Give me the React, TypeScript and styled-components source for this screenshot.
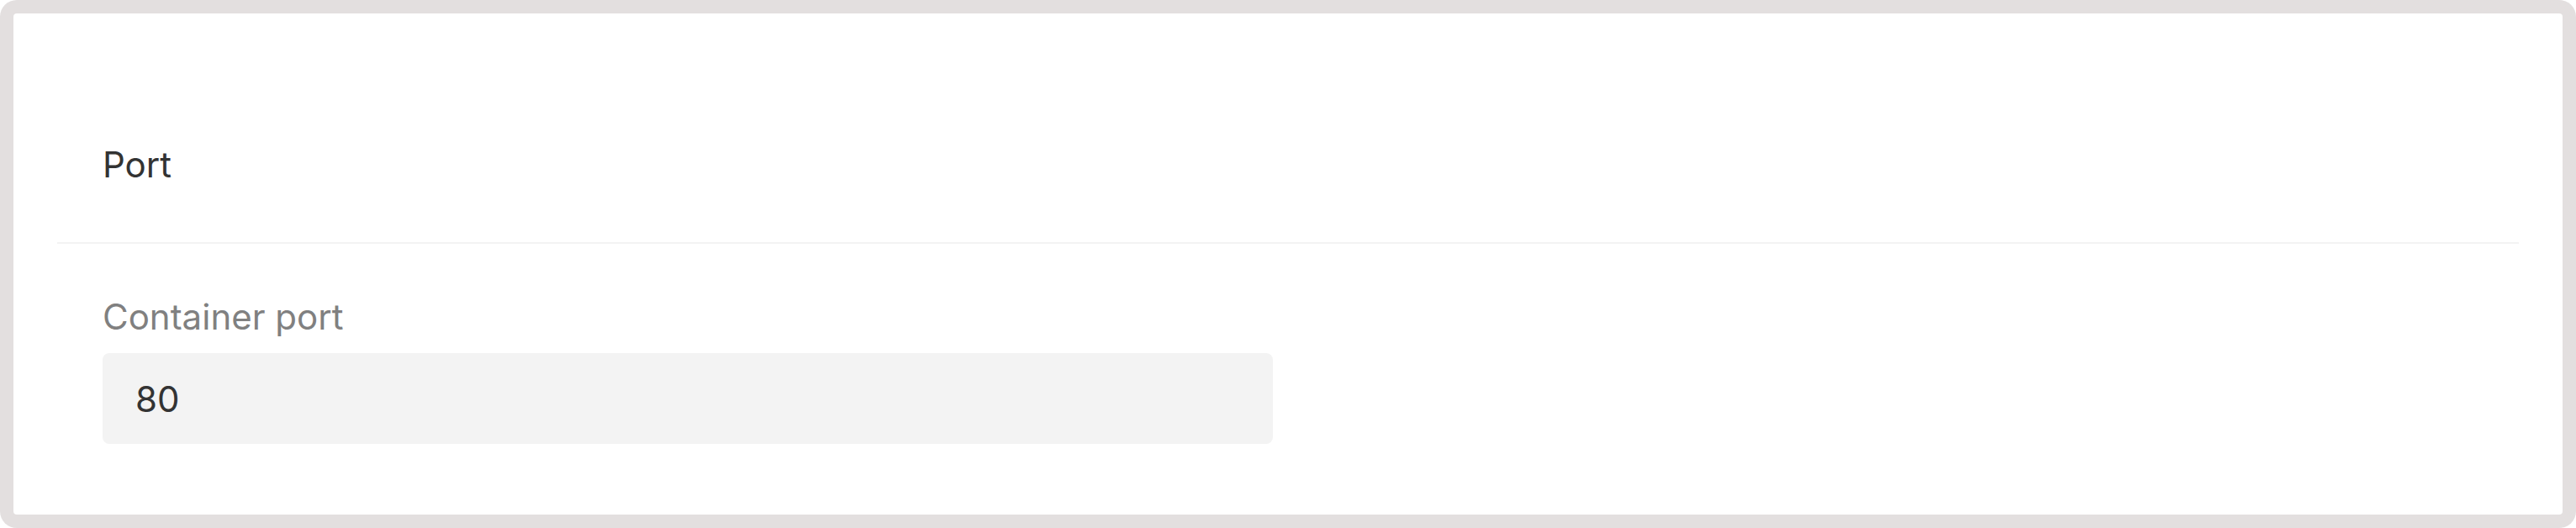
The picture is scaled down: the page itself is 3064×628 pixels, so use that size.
import * as React from 'react'
import styled, { createGlobalStyle } from 'styled-components'

const GlobalStyle = createGlobalStyle`
  html, body {
    margin: 0;
    padding: 0;
    background: #ffffff;
  }
  * {
    box-sizing: border-box;
  }
`

const Frame = styled.div`
  width: 3064px;
  height: 628px;
  padding: 16px;
  background: #e3dfdf;
  border-radius: 20px;
  font-family: Inter, 'Noto Sans', sans-serif;
`

const Card = styled.div`
  height: 100%;
  background: #ffffff;
  border-radius: 4px;
  padding: 0 52px;
  display: flex;
  flex-direction: column;
`

const Header = styled.div`
  height: 274px;
  padding: 0 54px 62px;
  display: flex;
  align-items: flex-end;
  border-bottom: 2px solid #f3f3f3;
`

const Title = styled.h2`
  margin: 0;
  font-size: 42px;
  font-weight: 400;
  line-height: 60px;
  color: #333333;
`

const Body = styled.div`
  padding: 57px 54px 0;
  display: flex;
  flex-direction: column;
  gap: 13px;
`

const Label = styled.label`
  font-size: 42px;
  line-height: 60px;
  color: #808080;
`

const Input = styled.input`
  width: 1392px;
  height: 108px;
  border: none;
  outline: none;
  border-radius: 8px;
  background: #f3f3f3;
  padding: 0 39px;
  font-family: Inter, 'Noto Sans', sans-serif;
  font-size: 42px;
  color: #333333;
`

const App = () => {
  return (
    <>
      <GlobalStyle />
      <Frame>
        <Card>
          <Header>
            <Title>Port</Title>
          </Header>
          <Body>
            <Label htmlFor="container-port">Container port</Label>
            <Input id="container-port" defaultValue="80" readOnly />
          </Body>
        </Card>
      </Frame>
    </>
  )
}

export default App
